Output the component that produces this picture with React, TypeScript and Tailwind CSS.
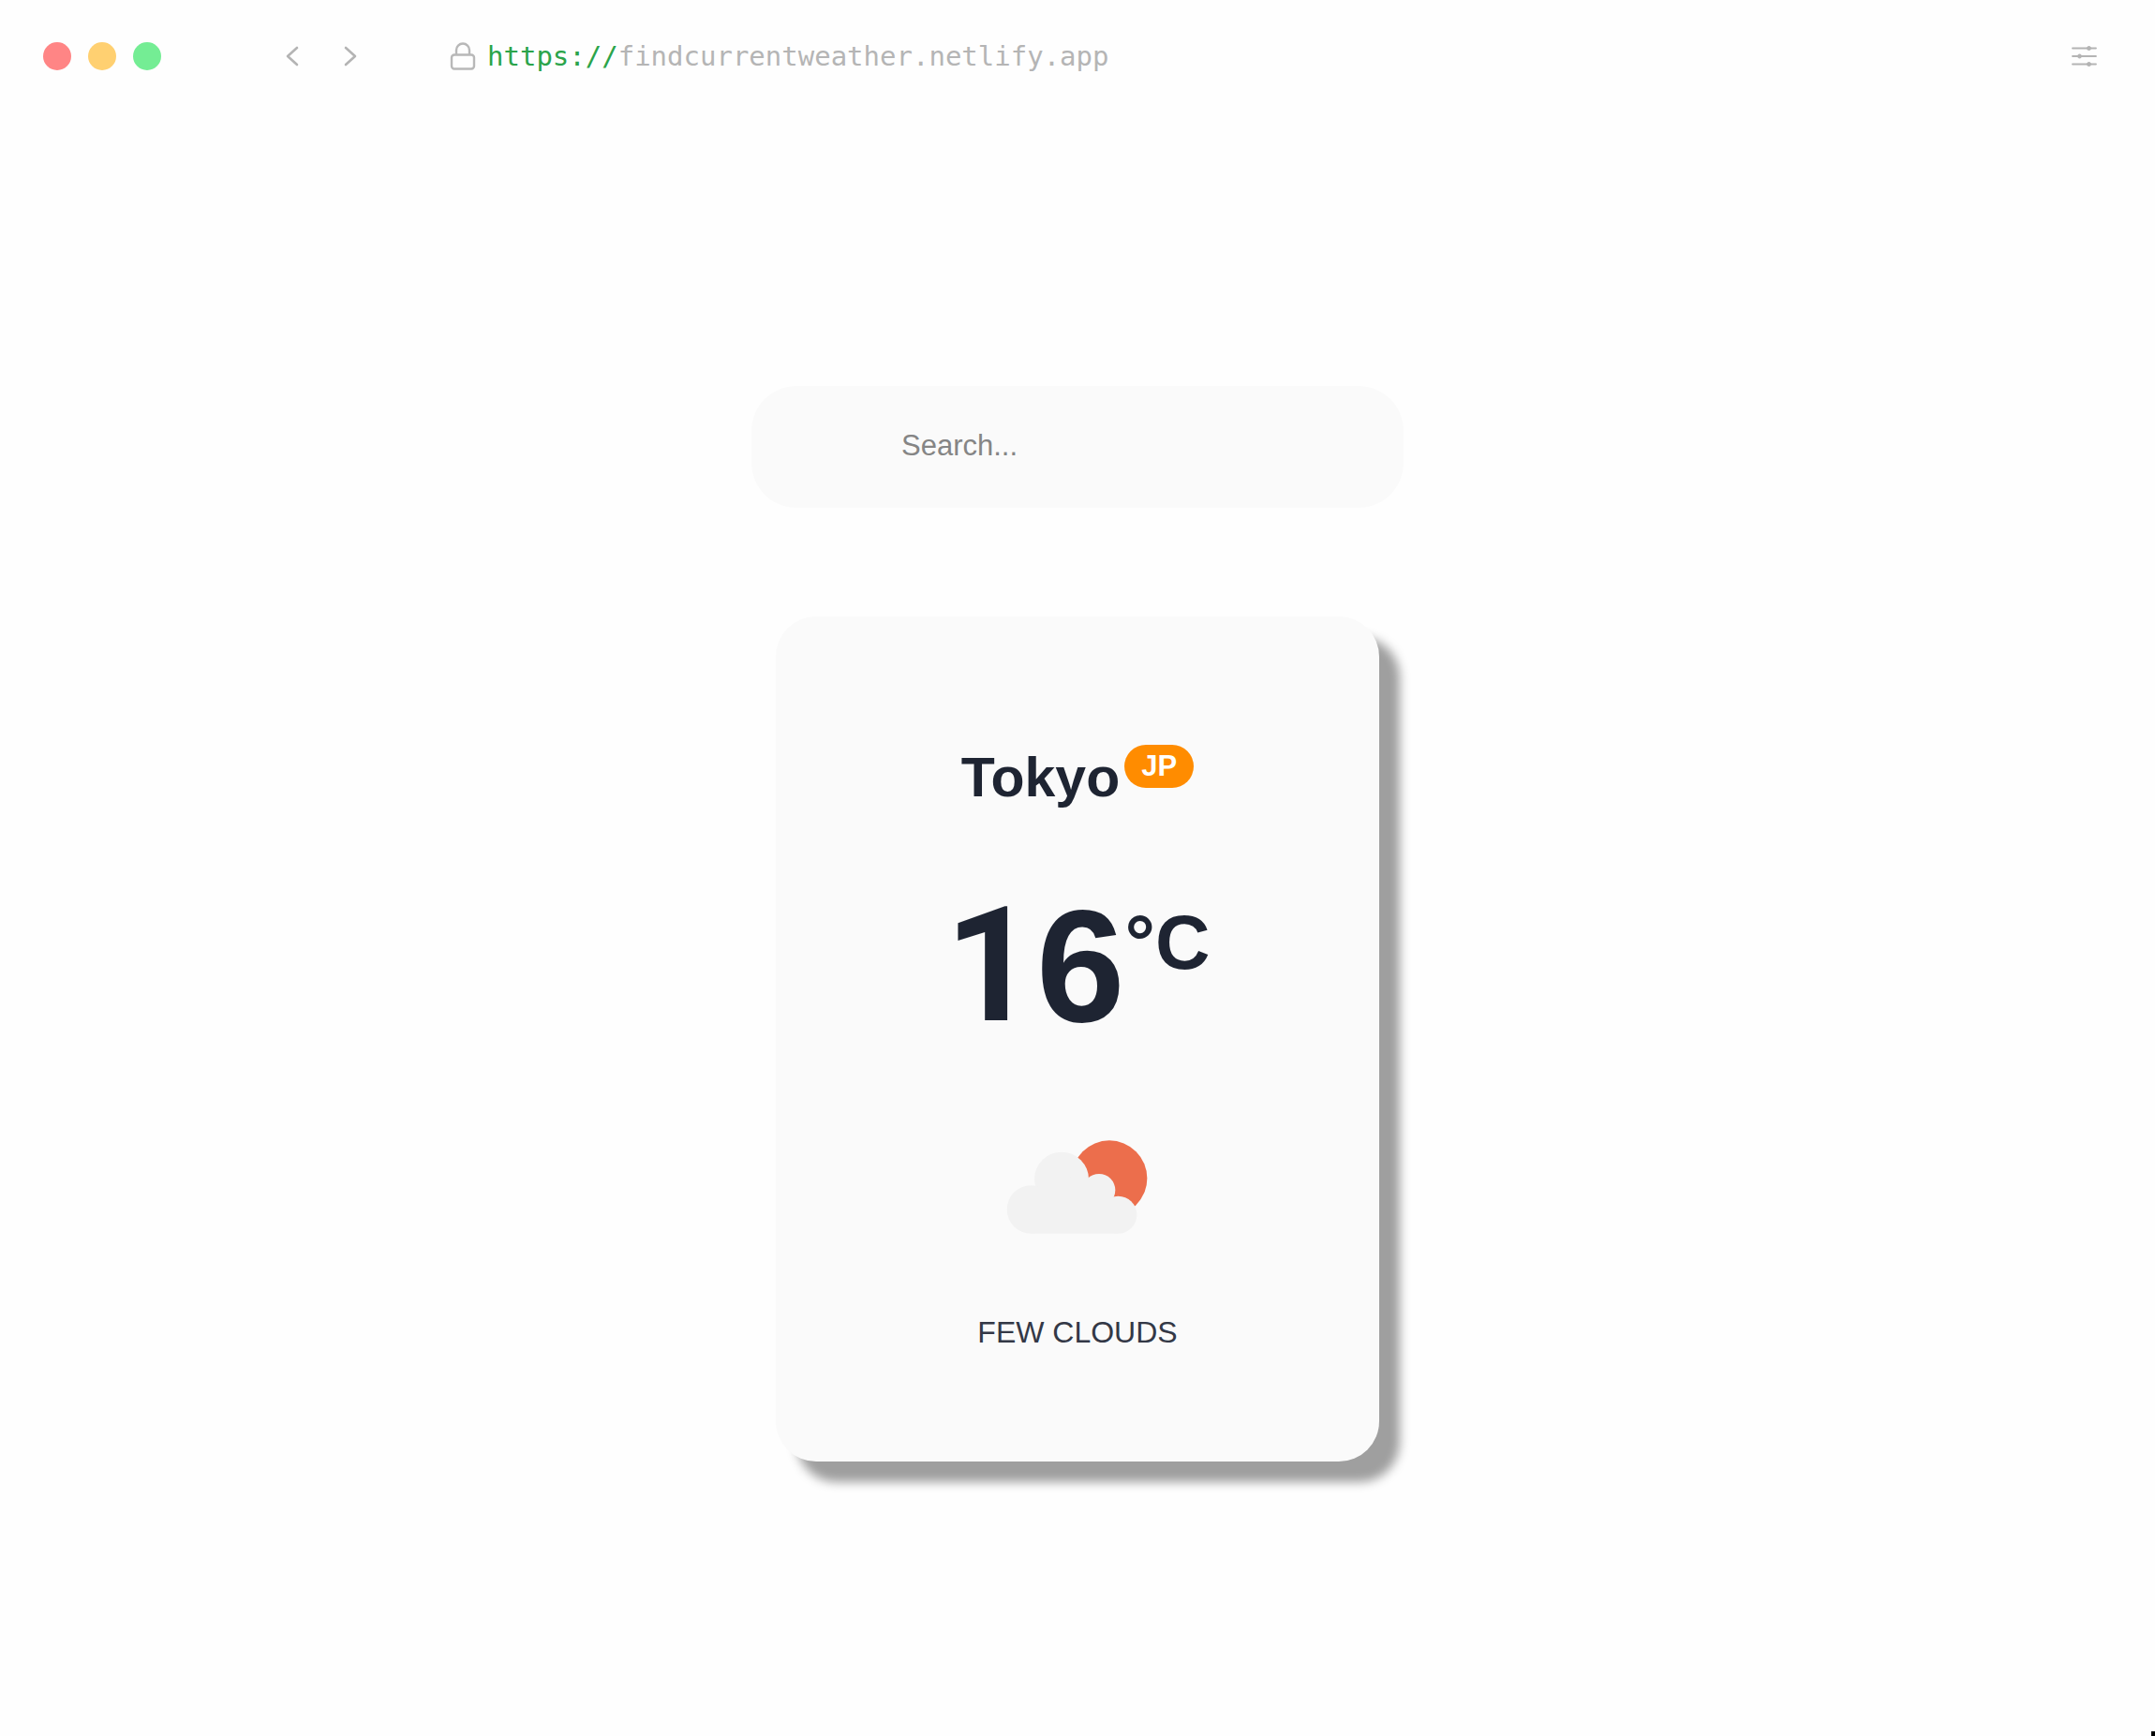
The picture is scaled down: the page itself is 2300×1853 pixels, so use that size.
import { useState } from "react";

function WindowDots() {
  return (
    <div className="flex gap-[18px]">
      <span className="size-[30px] rounded-full bg-[#ff8585]" />
      <span className="size-[30px] rounded-full bg-[#ffd071]" />
      <span className="size-[30px] rounded-full bg-[#74ed94]" />
    </div>
  );
}

function BrowserBar() {
  return (
    <header className="flex h-[120px] items-center pl-[46px] pr-[60px]">
      <WindowDots />
      <nav className="ml-[124px] flex gap-[30px] text-[#b4b4b4]">
        <button type="button" aria-label="Back" className="flex size-8 items-center justify-center">
          <svg width="14" height="24" viewBox="0 0 14 24" fill="none" stroke="currentColor" strokeWidth="2.6" strokeLinecap="round" strokeLinejoin="round">
            <path d="M12 3 2 12l10 9" />
          </svg>
        </button>
        <button type="button" aria-label="Forward" className="flex size-8 items-center justify-center">
          <svg width="14" height="24" viewBox="0 0 14 24" fill="none" stroke="currentColor" strokeWidth="2.6" strokeLinecap="round" strokeLinejoin="round">
            <path d="m2 3 10 9-10 9" />
          </svg>
        </button>
      </nav>
      <div className="ml-[90px] flex items-center gap-[12px]">
        <svg width="28" height="32" viewBox="0 0 28 32" fill="none" stroke="#b8b8b8" strokeWidth="2.4">
          <rect x="2" y="14.5" width="24" height="15" rx="3" />
          <path d="M7 14.500V9.500a7 7 0 0 1 14 0v5" />
        </svg>
        <a href="https://findcurrentweather.netlify.app" className="font-['DejaVu_Sans_Mono',monospace] text-[29px] leading-10 text-[#b5b5b5]">
          <span className="text-[#2ba44a]">https://</span>findcurrentweather.netlify.app
        </a>
      </div>
      <button type="button" aria-label="Settings" className="ml-auto">
        <svg width="30" height="24" viewBox="0 0 30 24" fill="#b4b4b4" stroke="#b4b4b4">
          <path d="M2 3.500h25M2 12h25M2 20.500h25" strokeWidth="1.800" strokeLinecap="round" />
          <circle cx="19.500" cy="3.500" r="2" />
          <circle cx="9.500" cy="12" r="2" />
          <circle cx="19.500" cy="20.500" r="2" />
        </svg>
      </button>
    </header>
  );
}

function FewCloudsIcon() {
  return (
    <svg className="mt-[88px] h-[102px] w-[152px]" viewBox="105 74 456 306" role="img" aria-label="Few clouds">
      <circle cx="435" cy="199" r="121" fill="#ec6e4c" />
      <g fill="#f2f2f2">
        <circle cx="282" cy="202" r="87" />
        <circle cx="184" cy="299" r="77" />
        <circle cx="402" cy="237" r="52" />
        <circle cx="463" cy="316" r="60" />
        <path d="M184 376V250l90-60 130 20 59 100v66z" />
      </g>
    </svg>
  );
}

export default function App() {
  const [query, setQuery] = useState("");
  return (
    <div className="relative flex min-h-screen flex-col bg-[#fefefe] font-['Liberation_Sans',Arial,sans-serif] text-[#1e2432]">
      <BrowserBar />
      <main className="flex flex-col items-center pt-[292px]">
        <input
          type="text"
          aria-label="Search"
          placeholder="Search..."
          value={query}
          onChange={(e) => setQuery(e.target.value)}
          className="h-[130px] w-full max-w-[696px] rounded-[48px] bg-[#fafafa] px-40 pb-[2px] text-[31px] text-[#757575] outline-none placeholder:text-[#858585]"
        />
        <section className="mt-[116px] flex w-full max-w-[644px] flex-col items-center rounded-[43px] bg-[#fafafa] pt-[134px] pb-[118px] shadow-[22px_22px_11px_#9f9f9f]">
          <h1 className="flex items-start gap-[5px] text-[59px] leading-[76px] font-bold">
            Tokyo
            <span className="mt-[3px] rounded-full bg-[#ff8c00] px-[18px] text-[31px] leading-[46px] text-white">JP</span>
          </h1>
          <p className="mt-[66px] flex items-start text-[170px] leading-[194px] font-bold">
            <span className="font-[Roboto,sans-serif]">1</span>6
            <span className="mt-6 text-[81px] leading-[96px]">°C</span>
          </p>
          <FewCloudsIcon />
          <p className="mt-[84px] text-[32px] leading-[40px] text-[#333846] uppercase">Few clouds</p>
        </section>
      </main>
      <span className="absolute right-0 bottom-0 h-[5px] w-1 bg-black" />
    </div>
  );
}
